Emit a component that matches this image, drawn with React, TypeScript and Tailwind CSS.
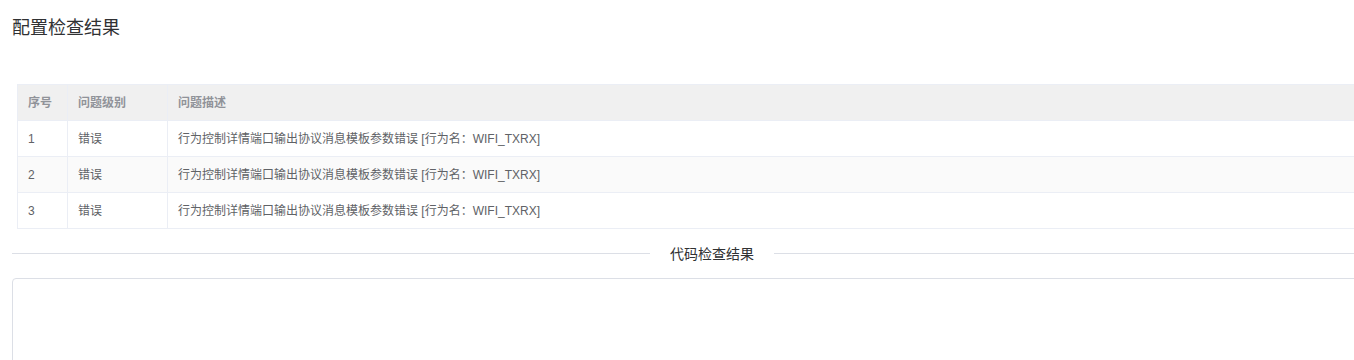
const rows = [1, 2, 3].map((n) => ({
  id: n,
  level: "错误",
  desc: "行为控制详情端口输出协议消息模板参数错误 [行为名：WIFI_TXRX]",
}));

export default function App() {
  return (
    <div
      className="h-[360px] w-[1354px] overflow-hidden bg-white"
      style={{ fontFamily: '"Liberation Sans", "Noto Sans CJK SC", sans-serif' }}
    >
      <div className="w-[1412px] pl-3">
        <h2 className="mt-4 text-[18px] leading-6 font-normal text-[#303133]">配置检查结果</h2>

        <table className="mt-11 ml-[5px] w-[1390px] border-collapse text-[12px] leading-[18px]">
          <thead>
            <tr className="h-9 bg-[#f0f0f0] text-left text-[#909399]">
              <th className="w-[50px] border border-[#ebeef5] px-[10px] font-bold">序号</th>
              <th className="w-[100px] border border-[#ebeef5] px-[10px] font-bold">问题级别</th>
              <th className="border border-[#ebeef5] px-[10px] font-bold">问题描述</th>
            </tr>
          </thead>
          <tbody>
            {rows.map((r, i) => (
              <tr
                key={r.id}
                className={`h-9 text-[#606266] ${i % 2 === 1 ? "bg-[#fafafa]" : "bg-white"}`}
              >
                <td className="border border-[#ebeef5] px-[10px]">{r.id}</td>
                <td className="border border-[#ebeef5] px-[10px]">{r.level}</td>
                <td className="border border-[#ebeef5] px-[10px]">{r.desc}</td>
              </tr>
            ))}
          </tbody>
        </table>

        {/* divider: 1px line, label sits over its middle */}
        <div className="relative my-6 h-px w-[1400px] bg-[#dcdfe6]">
          <span className="absolute top-1/2 left-1/2 -translate-x-1/2 -translate-y-1/2 bg-white px-5 text-[14px] leading-5 whitespace-nowrap text-[#303133]">
            代码检查结果
          </span>
        </div>

        <textarea
          readOnly
          className="block h-[120px] w-[1400px] resize-none rounded border border-[#dcdfe6] bg-white outline-none"
        />
      </div>
    </div>
  );
}
